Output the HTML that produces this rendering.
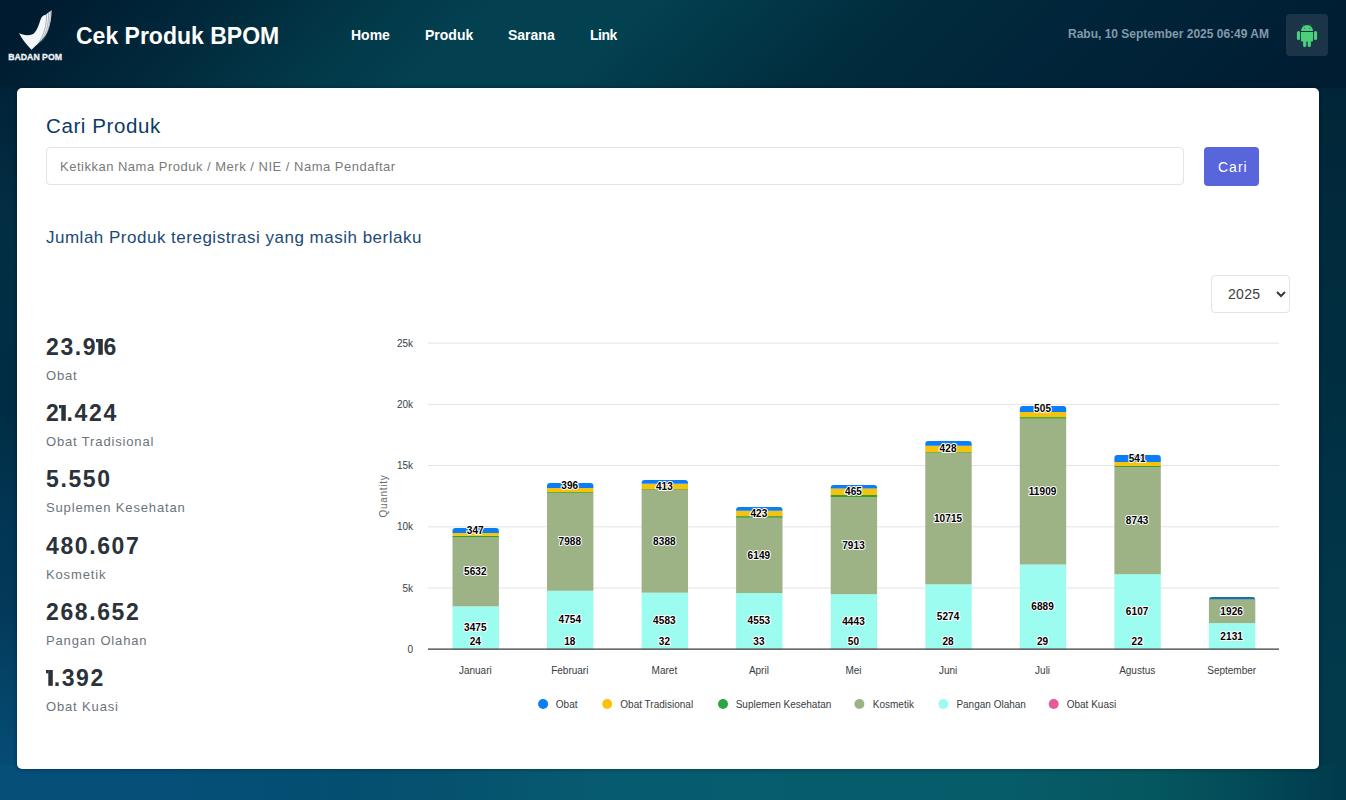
<!DOCTYPE html>
<html lang="id">
<head>
<meta charset="utf-8">
<title>Cek Produk BPOM</title>
<style>
*{box-sizing:border-box;margin:0;padding:0}
html,body{width:1346px;height:800px;overflow:hidden}
body{position:relative;font-family:"Liberation Sans",sans-serif;background:#022d42}
#bg-h{left:0;top:0;width:1346px;height:92px;background:linear-gradient(137.2deg,#001b30 3.3%,#01293b 15.4%,#023a4a 27.6%,#034050 34.5%,#034050 45.6%,#023a4a 51.2%,#012d3e 62.3%,#01253a 75.5%,#001d32 96.7%)}
#bg-l{left:0;top:88px;width:24px;height:685px;background:linear-gradient(180deg,#01233a 0px,#022d42 120px,#012e44 218px,#002d45 320px,#013552 418px,#033a5a 520px,#04466c 618px,#054d76 685px)}
#bg-r{left:1312px;top:88px;width:34px;height:685px;background:linear-gradient(180deg,#01243a 0px,#012638 18px,#012c3e 168px,#002f42 322px,#02374a 518px,#023a4c 638px,#023a4c 685px)}
#bg-b{left:0;top:765px;width:1346px;height:35px;background:linear-gradient(90deg,#054f79 0px,#045078 156px,#044e72 305px,#05526f 446px,#075b70 610px,#075c6c 806px,#075c6a 1005px,#05575f 1150px,#034a58 1250px,#003a4c 1346px)}
.abs{position:absolute;white-space:nowrap}
#hdr-title{left:76px;top:21px;font-size:23px;font-weight:700;color:#fff;line-height:30px;letter-spacing:0}
.nav{top:27px;font-size:14px;font-weight:700;color:#fff;line-height:16px}
#date{top:27px;left:1068px;font-size:12px;font-weight:700;color:#8499aa;line-height:14px}
#andro{left:1286px;top:14px;width:42px;height:42px;border-radius:4px;background:#1c3447}
#card{left:17px;top:88px;width:1302px;height:681px;background:#fff;border-radius:5px;box-shadow:0 0 4px rgba(0,8,15,0.45)}
#cari{left:46px;top:114px;font-size:20.5px;color:#0d3a66;line-height:24px;letter-spacing:0.6px}
#inp{left:46px;top:147px;width:1138px;height:38px;border:1px solid #e2e3e5;border-radius:4px}
#ph{left:60px;top:159px;font-size:13px;color:#7a7a7a;line-height:15px;letter-spacing:0.5px}
#btn{left:1204px;top:147px;width:55px;height:39px;background:#5865db;border-radius:4px}
#btnt{left:1218px;top:159px;font-size:14px;color:#fff;line-height:16px;letter-spacing:1px}
#jml{left:46px;top:228px;font-size:17px;color:#1c4a78;line-height:19px;letter-spacing:0.5px}
#sel{left:1211px;top:275px;width:79px;height:38px;border:1px solid #e3e4e6;border-radius:4px}
#selt{left:1228px;top:286px;font-size:14px;color:#3e3e3e;line-height:16px;letter-spacing:0.3px}
.num{left:46px;font-size:23px;font-weight:700;color:#2b323a;line-height:26px;letter-spacing:1.6px}
.one{vertical-align:baseline;margin-left:-1.5px;margin-right:-0.9px}
.lbl{left:46px;font-size:13px;color:#6c737c;line-height:15px;letter-spacing:0.85px}
#chart text{font-family:"Liberation Sans",sans-serif}
.yl{font-size:10px;fill:#373d3f}
.xl{font-size:10px;fill:#373d3f}
.yt{font-size:10px;fill:#6b6b6b;letter-spacing:0.7px}
.dl{font-size:10px;font-weight:700;fill:#000;stroke:#fff;stroke-width:2px;paint-order:stroke;stroke-linejoin:round;letter-spacing:0.1px}
.lg{font-size:10px;fill:#373d3f}
</style>
</head>
<body>
<div id="bg-h" class="abs"></div><div id="bg-l" class="abs"></div><div id="bg-r" class="abs"></div><div id="bg-b" class="abs"></div>
<!-- logo -->
<svg class="abs" style="left:0;top:0" width="70" height="64" viewBox="0 0 70 64">
  <path d="M19.1,33 C23,35.2 28,36.2 33.2,33.9 C37.5,31 39.5,22 41,18.5 C42,16 43.5,15.2 45.2,15 L51.6,10.2 C51.4,20 49.5,31 44.2,37.2 C41,41 36,45.5 31.5,49.8 C27.5,45.5 22,39.5 19.1,33 Z" fill="#f4f7f9"/>
  <path d="M46.6,14.2 C46.8,25 44,35.5 37.6,44.6" stroke="#5a6b7c" stroke-width="0.5" fill="none"/>
  <path d="M48.6,12.7 C48.8,24.5 46.2,35.5 39.6,43.2" stroke="#5a6b7c" stroke-width="0.5" fill="none"/>
  <path d="M50.3,11.3 C50.4,23.5 48.2,35 41.6,41.6" stroke="#5a6b7c" stroke-width="0.5" fill="none"/>
  <text x="8.2" y="59.7" font-family="Liberation Sans" font-weight="700" font-size="9.8" fill="#eef3f7" stroke="#eef3f7" stroke-width="0.35" textLength="53.8" lengthAdjust="spacingAndGlyphs">BADAN POM</text>
</svg>
<div id="hdr-title" class="abs">Cek Produk BPOM</div>
<div class="abs nav" style="left:351px">Home</div>
<div class="abs nav" style="left:425px">Produk</div>
<div class="abs nav" style="left:508px">Sarana</div>
<div class="abs nav" style="left:590px;letter-spacing:-0.5px">Link</div>
<div id="date" class="abs">Rabu, 10 September 2025 06:49 AM</div>
<div id="andro" class="abs">
 <svg width="42" height="42" viewBox="0 0 42 42" style="position:absolute;left:0;top:0">
  <g fill="#4ccf7c">
   <path d="M15 17 A6 6 0 0 1 27 17 Z"/>
   <path d="M15 18 H27 V26.5 Q27 27.5 26 27.5 H16 Q15 27.5 15 26.5 Z"/>
   <rect x="10.9" y="17" width="3.2" height="9" rx="1.6"/>
   <rect x="27.9" y="17" width="3.2" height="9" rx="1.6"/>
   <rect x="17.1" y="26" width="3.2" height="7" rx="1.6"/>
   <rect x="21.7" y="26" width="3.2" height="7" rx="1.6"/>
  </g>
  <path d="M17.7 11.6 L17.1 10.6 M24.3 11.6 L24.9 10.6" stroke="#4ccf7c" stroke-width="0.6"/>
  <circle cx="18.6" cy="14.3" r="0.6" fill="#2f7a52"/><circle cx="23.4" cy="14.3" r="0.6" fill="#2f7a52"/>
 </svg>
</div>

<div id="card" class="abs"></div>
<div id="cari" class="abs">Cari Produk</div>
<div id="inp" class="abs"></div>
<div id="ph" class="abs">Ketikkan Nama Produk / Merk / NIE / Nama Pendaftar</div>
<div id="btn" class="abs"></div>
<div id="btnt" class="abs">Cari</div>
<div id="jml" class="abs">Jumlah Produk teregistrasi yang masih berlaku</div>
<div id="sel" class="abs"></div>
<div id="selt" class="abs">2025</div>
<svg class="abs" style="left:1275px;top:289px" width="12" height="10" viewBox="0 0 12 10"><path d="M2 3 L6 7 L10 3" stroke="#343a40" stroke-width="2" fill="none"/></svg>

<div class="abs num" style="top:334px">23.9<svg class="one" width="8.6" height="15.8" viewBox="0 0 8.6 15.8"><rect x="2.3" y="0" width="4.5" height="15.8" fill="#2b323a"/><rect x="0" y="0" width="2.6" height="3.3" fill="#2b323a"/></svg>6</div>
<div class="abs lbl" style="top:368px">Obat</div>
<div class="abs num" style="top:400px">2<svg class="one" width="8.6" height="15.8" viewBox="0 0 8.6 15.8"><rect x="2.3" y="0" width="4.5" height="15.8" fill="#2b323a"/><rect x="0" y="0" width="2.6" height="3.3" fill="#2b323a"/></svg>.424</div>
<div class="abs lbl" style="top:434px">Obat Tradisional</div>
<div class="abs num" style="top:466px">5.550</div>
<div class="abs lbl" style="top:500px">Suplemen Kesehatan</div>
<div class="abs num" style="top:533px">480.607</div>
<div class="abs lbl" style="top:567px">Kosmetik</div>
<div class="abs num" style="top:599px">268.652</div>
<div class="abs lbl" style="top:633px">Pangan Olahan</div>
<div class="abs num" style="top:665px;left:46px"><svg class="one" style="margin-left:0" width="8.6" height="15.8" viewBox="0 0 8.6 15.8"><rect x="2.3" y="0" width="4.5" height="15.8" fill="#2b323a"/><rect x="0" y="0" width="2.6" height="3.3" fill="#2b323a"/></svg>.392</div>
<div class="abs lbl" style="top:699px">Obat Kuasi</div>

<!-- CHART -->
<svg id="chart" class="abs" style="left:0;top:0" width="1346" height="800">
<line x1="428.0" y1="588.0" x2="1279.0" y2="588.0" stroke="#e3e3e3" stroke-width="1"/>
<line x1="428.0" y1="526.8" x2="1279.0" y2="526.8" stroke="#e3e3e3" stroke-width="1"/>
<line x1="428.0" y1="465.5" x2="1279.0" y2="465.5" stroke="#e3e3e3" stroke-width="1"/>
<line x1="428.0" y1="404.3" x2="1279.0" y2="404.3" stroke="#e3e3e3" stroke-width="1"/>
<line x1="428.0" y1="343.1" x2="1279.0" y2="343.1" stroke="#e3e3e3" stroke-width="1"/>
<text x="413" y="652.7" text-anchor="end" class="yl">0</text>
<text x="413" y="591.5" text-anchor="end" class="yl">5k</text>
<text x="413" y="530.3" text-anchor="end" class="yl">10k</text>
<text x="413" y="469.0" text-anchor="end" class="yl">15k</text>
<text x="413" y="407.8" text-anchor="end" class="yl">20k</text>
<text x="413" y="346.6" text-anchor="end" class="yl">25k</text>
<text class="yt" transform="translate(386.5,496) rotate(-90)" text-anchor="middle">Quantity</text>
<rect x="452.5" y="648.91" width="46.4" height="0.29" fill="#e8599a"/>
<rect x="452.5" y="606.36" width="46.4" height="42.55" fill="#9bfcef"/>
<rect x="452.5" y="537.40" width="46.4" height="68.96" fill="#9db386"/>
<rect x="452.5" y="535.80" width="46.4" height="1.60" fill="#3f9a2a"/>
<rect x="452.5" y="532.90" width="46.4" height="2.90" fill="#f5c20e"/>
<path d="M452.5,532.90 L452.5,531.00 Q452.5,528.00 455.5,528.00 L495.9,528.00 Q498.9,528.00 498.9,531.00 L498.9,532.90 Z" fill="#0b7df5"/>
<text x="475.3" y="674" text-anchor="middle" class="xl">Januari</text>
<rect x="547.0" y="648.98" width="46.4" height="0.22" fill="#e8599a"/>
<rect x="547.0" y="590.77" width="46.4" height="58.21" fill="#9bfcef"/>
<rect x="547.0" y="492.97" width="46.4" height="97.81" fill="#9db386"/>
<rect x="547.0" y="492.10" width="46.4" height="0.87" fill="#3f9a2a"/>
<rect x="547.0" y="487.90" width="46.4" height="4.20" fill="#f5c20e"/>
<path d="M547.0,487.90 L547.0,486.00 Q547.0,483.00 550.0,483.00 L590.4,483.00 Q593.4,483.00 593.4,486.00 L593.4,487.90 Z" fill="#0b7df5"/>
<text x="569.8" y="674" text-anchor="middle" class="xl">Februari</text>
<rect x="641.6" y="648.81" width="46.4" height="0.39" fill="#e8599a"/>
<rect x="641.6" y="592.69" width="46.4" height="56.11" fill="#9bfcef"/>
<rect x="641.6" y="489.99" width="46.4" height="102.70" fill="#9db386"/>
<rect x="641.6" y="489.20" width="46.4" height="0.79" fill="#3f9a2a"/>
<rect x="641.6" y="483.80" width="46.4" height="5.40" fill="#f5c20e"/>
<path d="M641.6,483.80 L641.6,483.10 Q641.6,480.10 644.6,480.10 L685.0,480.10 Q688.0,480.10 688.0,483.10 L688.0,483.80 Z" fill="#0b7df5"/>
<text x="664.4" y="674" text-anchor="middle" class="xl">Maret</text>
<rect x="736.1" y="648.80" width="46.4" height="0.40" fill="#e8599a"/>
<rect x="736.1" y="593.05" width="46.4" height="55.75" fill="#9bfcef"/>
<rect x="736.1" y="517.76" width="46.4" height="75.29" fill="#9db386"/>
<rect x="736.1" y="516.10" width="46.4" height="1.66" fill="#3f9a2a"/>
<rect x="736.1" y="510.70" width="46.4" height="5.40" fill="#f5c20e"/>
<path d="M736.1,510.70 L736.1,510.00 Q736.1,507.00 739.1,507.00 L779.5,507.00 Q782.5,507.00 782.5,510.00 L782.5,510.70 Z" fill="#0b7df5"/>
<text x="758.9" y="674" text-anchor="middle" class="xl">April</text>
<rect x="830.7" y="648.59" width="46.4" height="0.61" fill="#e8599a"/>
<rect x="830.7" y="594.19" width="46.4" height="54.40" fill="#9bfcef"/>
<rect x="830.7" y="497.30" width="46.4" height="96.89" fill="#9db386"/>
<rect x="830.7" y="495.00" width="46.4" height="2.30" fill="#3f9a2a"/>
<rect x="830.7" y="488.50" width="46.4" height="6.50" fill="#f5c20e"/>
<path d="M830.7,488.50 L830.7,488.10 Q830.7,485.10 833.7,485.10 L874.1,485.10 Q877.1,485.10 877.1,488.10 L877.1,488.50 Z" fill="#0b7df5"/>
<text x="853.5" y="674" text-anchor="middle" class="xl">Mei</text>
<rect x="925.3" y="648.86" width="46.4" height="0.34" fill="#e8599a"/>
<rect x="925.3" y="584.28" width="46.4" height="64.57" fill="#9bfcef"/>
<rect x="925.3" y="453.09" width="46.4" height="131.19" fill="#9db386"/>
<rect x="925.3" y="452.20" width="46.4" height="0.89" fill="#3f9a2a"/>
<rect x="925.3" y="445.70" width="46.4" height="6.50" fill="#f5c20e"/>
<path d="M925.3,445.70 L925.3,444.10 Q925.3,441.10 928.3,441.10 L968.7,441.10 Q971.7,441.10 971.7,444.10 L971.7,445.70 Z" fill="#0b7df5"/>
<text x="948.1" y="674" text-anchor="middle" class="xl">Juni</text>
<rect x="1019.8" y="648.84" width="46.4" height="0.36" fill="#e8599a"/>
<rect x="1019.8" y="564.50" width="46.4" height="84.35" fill="#9bfcef"/>
<rect x="1019.8" y="418.68" width="46.4" height="145.81" fill="#9db386"/>
<rect x="1019.8" y="417.10" width="46.4" height="1.58" fill="#3f9a2a"/>
<rect x="1019.8" y="411.90" width="46.4" height="5.20" fill="#f5c20e"/>
<path d="M1019.8,411.90 L1019.8,408.90 Q1019.8,405.90 1022.8,405.90 L1063.2,405.90 Q1066.2,405.90 1066.2,408.90 L1066.2,411.90 Z" fill="#0b7df5"/>
<text x="1042.6" y="674" text-anchor="middle" class="xl">Juli</text>
<rect x="1114.4" y="648.93" width="46.4" height="0.27" fill="#e8599a"/>
<rect x="1114.4" y="574.16" width="46.4" height="74.77" fill="#9bfcef"/>
<rect x="1114.4" y="467.11" width="46.4" height="107.05" fill="#9db386"/>
<rect x="1114.4" y="465.90" width="46.4" height="1.21" fill="#3f9a2a"/>
<rect x="1114.4" y="462.00" width="46.4" height="3.90" fill="#f5c20e"/>
<path d="M1114.4,462.00 L1114.4,458.00 Q1114.4,455.00 1117.4,455.00 L1157.8,455.00 Q1160.8,455.00 1160.8,458.00 L1160.8,462.00 Z" fill="#0b7df5"/>
<text x="1137.2" y="674" text-anchor="middle" class="xl">Agustus</text>
<rect x="1208.9" y="623.11" width="46.4" height="26.09" fill="#9bfcef"/>
<rect x="1208.9" y="599.53" width="46.4" height="23.58" fill="#9db386"/>
<path d="M1208.9,599.53 L1208.9,600.00 Q1208.9,597.00 1211.9,597.00 L1252.3,597.00 Q1255.3,597.00 1255.3,600.00 L1255.3,599.53 Z" fill="#1f6e9c"/>
<text x="1231.7" y="674" text-anchor="middle" class="xl">September</text>
<line x1="428.0" y1="649.2" x2="1279.0" y2="649.2" stroke="#3a3a3a" stroke-width="1.3"/>
<text x="475.3" y="575.3" text-anchor="middle" class="dl">5632</text>
<text x="475.3" y="631.0" text-anchor="middle" class="dl">3475</text>
<text x="475.3" y="644.9" text-anchor="middle" class="dl">24</text>
<text x="475.3" y="534.0" text-anchor="middle" class="dl">347</text>
<text x="569.8" y="545.3" text-anchor="middle" class="dl">7988</text>
<text x="569.8" y="623.3" text-anchor="middle" class="dl">4754</text>
<text x="569.8" y="644.9" text-anchor="middle" class="dl">18</text>
<text x="569.8" y="489.0" text-anchor="middle" class="dl">396</text>
<text x="664.4" y="544.7" text-anchor="middle" class="dl">8388</text>
<text x="664.4" y="624.2" text-anchor="middle" class="dl">4583</text>
<text x="664.4" y="644.9" text-anchor="middle" class="dl">32</text>
<text x="664.4" y="490.0" text-anchor="middle" class="dl">413</text>
<text x="758.9" y="558.8" text-anchor="middle" class="dl">6149</text>
<text x="758.9" y="624.3" text-anchor="middle" class="dl">4553</text>
<text x="758.9" y="644.9" text-anchor="middle" class="dl">33</text>
<text x="758.9" y="516.9" text-anchor="middle" class="dl">423</text>
<text x="853.5" y="549.1" text-anchor="middle" class="dl">7913</text>
<text x="853.5" y="624.8" text-anchor="middle" class="dl">4443</text>
<text x="853.5" y="644.9" text-anchor="middle" class="dl">50</text>
<text x="853.5" y="494.8" text-anchor="middle" class="dl">465</text>
<text x="948.1" y="522.1" text-anchor="middle" class="dl">10715</text>
<text x="948.1" y="620.0" text-anchor="middle" class="dl">5274</text>
<text x="948.1" y="644.9" text-anchor="middle" class="dl">28</text>
<text x="948.1" y="451.5" text-anchor="middle" class="dl">428</text>
<text x="1042.6" y="495.0" text-anchor="middle" class="dl">11909</text>
<text x="1042.6" y="610.1" text-anchor="middle" class="dl">6889</text>
<text x="1042.6" y="644.9" text-anchor="middle" class="dl">29</text>
<text x="1042.6" y="412.0" text-anchor="middle" class="dl">505</text>
<text x="1137.2" y="524.0" text-anchor="middle" class="dl">8743</text>
<text x="1137.2" y="614.9" text-anchor="middle" class="dl">6107</text>
<text x="1137.2" y="644.9" text-anchor="middle" class="dl">22</text>
<text x="1137.2" y="461.8" text-anchor="middle" class="dl">541</text>
<text x="1231.7" y="614.7" text-anchor="middle" class="dl">1926</text>
<text x="1231.7" y="639.6" text-anchor="middle" class="dl">2131</text>
<circle cx="543.1" cy="704" r="5" fill="#0b7df5"/>
<text x="555.8" y="707.7" class="lg">Obat</text>
<circle cx="607.2" cy="704" r="5" fill="#ffc107"/>
<text x="620.3" y="707.7" class="lg">Obat Tradisional</text>
<circle cx="723" cy="704" r="5" fill="#28a745"/>
<text x="735.7" y="707.7" class="lg">Suplemen Kesehatan</text>
<circle cx="859.4" cy="704" r="5" fill="#9db386"/>
<text x="872.8" y="707.7" class="lg">Kosmetik</text>
<circle cx="943.4" cy="704" r="5" fill="#9bfcef"/>
<text x="956.4" y="707.7" class="lg">Pangan Olahan</text>
<circle cx="1053.7" cy="704" r="5" fill="#e8599a"/>
<text x="1066.7" y="707.7" class="lg">Obat Kuasi</text>
</svg>
</body>
</html>
